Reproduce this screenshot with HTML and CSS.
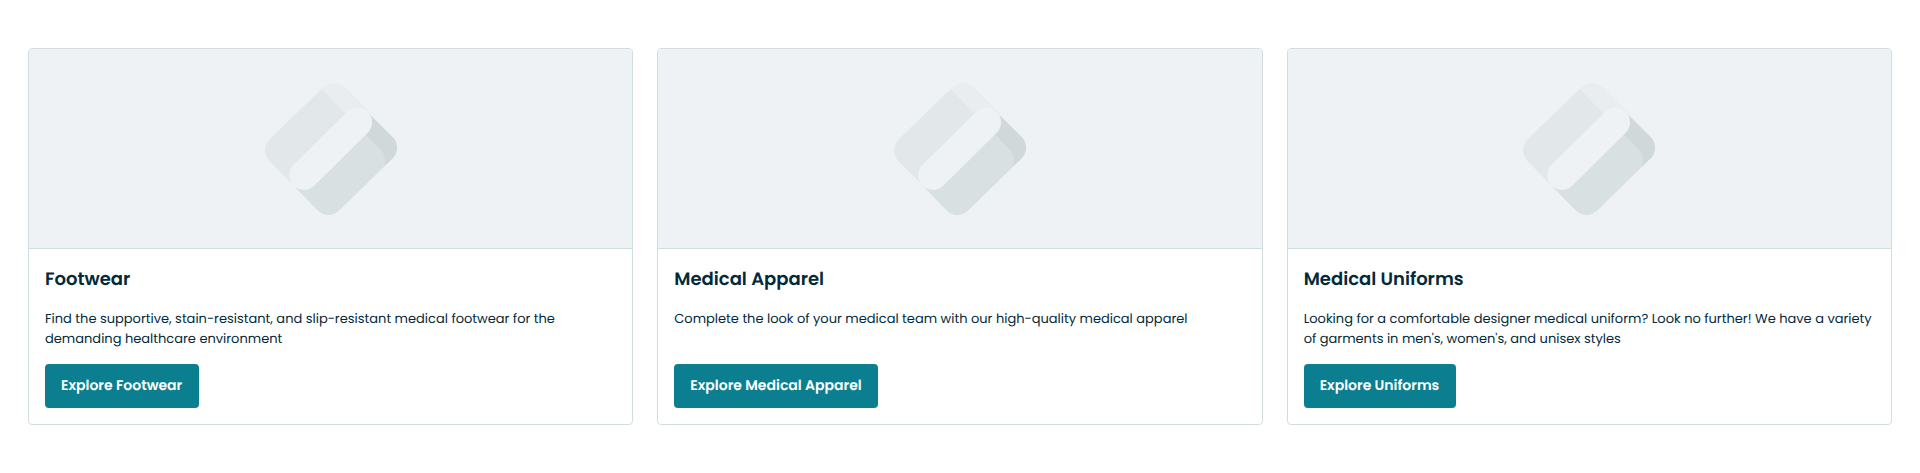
FILE: index.html
```html
<!DOCTYPE html>
<html lang="en">
<head>
<meta charset="utf-8">
<title>Medical Categories</title>
<link rel="stylesheet" href="styles.css">
</head>
<body>
<svg class="sprite" aria-hidden="true">
  <symbol id="placeholder" viewBox="74 69 397 396">
    <path fill="#e2e7e9" d="M245 86 L91 235 C69 256 69 284 88 304 L165 382 L317 160 Z"/>
    <path fill="#e9edef" d="M245 86 C267 63 297 63 320 86 L396 162 L317 160 Z"/>
    <path fill="#d0d8da" d="M370 180 L390 163 L460 233 C475 249 475 276 460 293 L431 321 L370 230 Z"/>
    <path fill="#d9e0e2" d="M165 383 L232 451 C251 470 278 470 298 451 L431 321 C438 305 436 284 423 269 L380 226 L340 220 Z"/>
    <path stroke="#eef2f5" stroke-width="88" stroke-linecap="round" d="M191 346 L352 187"/>
  </symbol>
</svg>
<main class="cards">
  <article class="card">
    <div class="card-media"><svg class="logo"><use href="#placeholder"/></svg></div>
    <div class="card-body">
      <h2 class="card-title">Footwear</h2>
      <p class="card-text">Find the supportive, stain-resistant, and slip-resistant medical footwear for the<br>demanding healthcare environment</p>
      <a class="button">Explore Footwear</a>
    </div>
  </article>
  <article class="card">
    <div class="card-media"><svg class="logo"><use href="#placeholder"/></svg></div>
    <div class="card-body">
      <h2 class="card-title">Medical Apparel</h2>
      <p class="card-text">Complete the look of your medical team with our high-quality medical apparel</p>
      <a class="button">Explore Medical Apparel</a>
    </div>
  </article>
  <article class="card">
    <div class="card-media"><svg class="logo"><use href="#placeholder"/></svg></div>
    <div class="card-body">
      <h2 class="card-title">Medical Uniforms</h2>
      <p class="card-text">Looking for a comfortable designer medical uniform? Look no further! We have a variety<br>of garments in men's, women's, and unisex styles</p>
      <a class="button">Explore Uniforms</a>
    </div>
  </article>
</main>
</body>
</html>
```
FILE: styles.css
```css
* { box-sizing: border-box; }
body {
  margin: 0;
  background: #fff;
  color: #042a3a;
  font-family: Poppins, Inter, sans-serif;
  text-rendering: geometricPrecision;
}
.sprite { display: none; }
.cards {
  display: grid;
  grid-template-columns: repeat(3, 1fr);
  gap: 24px;
  padding: 48px 28px;
}
.card {
  height: 377px;
  border: 1px solid #d3dddf;
  border-radius: 4px;
  overflow: hidden;
}
.card-media {
  display: flex;
  align-items: center;
  justify-content: center;
  height: 200px;
  background: #eef2f5;
  border-bottom: 1px solid #d0dcde;
}
.logo { width: 132px; height: 132px; fill: none; }
.card-body {
  display: flex;
  flex-direction: column;
  align-items: flex-start;
  padding: 17px 16px 16px;
}
.card-title {
  margin: 0 0 15px;
  font-size: 18px;
  font-weight: 600;
  line-height: 28px;
}
.card-text {
  height: 40px;
  margin: 0 0 15px;
  font-size: 13px;
  line-height: 20px;
  white-space: nowrap;
}
.button {
  display: flex;
  align-items: center;
  height: 44px;
  padding: 0 16.5px 1px 16px;
  border-radius: 4px;
  background: #0b7f8f;
  color: #fff;
  font-size: 14px;
  font-weight: 600;
  white-space: nowrap;
}
```
